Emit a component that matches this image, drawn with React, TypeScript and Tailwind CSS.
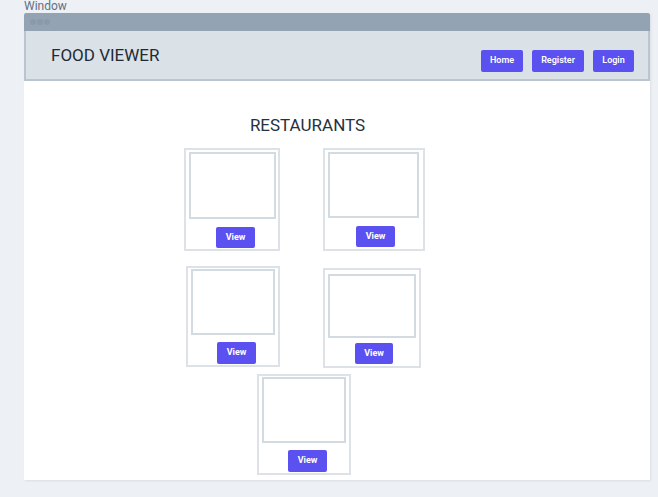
import React from "react";

type CardSpec = {
  outer: string;
  inner: string;
  button: string;
};

const Card = ({ spec }: { spec: CardSpec }) => (
  <div className={`flex flex-col border-2 border-[#dde2e8] bg-white ${spec.outer}`}>
    <div className={`border-2 border-[#d3dbe2] ${spec.inner}`} />
    <button
      className={`flex items-center justify-center rounded-[2px] bg-[#5b50f0] text-[9px] font-bold text-white ${spec.button}`}
    >
      View
    </button>
  </div>
);

const c1: CardSpec = {
  outer: "w-[96px] h-[103px]",
  inner: "ml-[3px] mt-[2px] w-[87px] h-[67px]",
  button: "ml-[30px] mt-[8px] w-[39px] h-[21px]",
};
const c2: CardSpec = {
  outer: "w-[102px] h-[103px]",
  inner: "ml-[3px] mt-[2px] w-[91px] h-[66px]",
  button: "ml-[31px] mt-[8px] w-[39px] h-[21px]",
};
const c3: CardSpec = {
  outer: "w-[94px] h-[101px] ml-[2px]",
  inner: "ml-[3px] mt-[1px] w-[84px] h-[66px]",
  button: "ml-[29px] mt-[7px] w-[39px] h-[22px]",
};
const c4: CardSpec = {
  outer: "w-[98px] h-[100px] mt-[2px]",
  inner: "ml-[3px] mt-[4px] w-[88px] h-[64px]",
  button: "ml-[30px] mt-[5px] w-[38px] h-[21px]",
};
const c5: CardSpec = {
  outer: "w-[94px] h-[101px] ml-[73px]",
  inner: "ml-[3px] mt-[1px] w-[84px] h-[66px]",
  button: "ml-[29px] mt-[7px] w-[39px] h-[22px]",
};

export default function App() {
  return (
    <div className="w-[658px] h-[497px] bg-[#edf0f5] font-['Roboto',sans-serif] overflow-hidden">
      <div className="pl-[24px] text-[12px] leading-[13px] text-[#607084]">Window</div>
      <div className="ml-[24px] w-[626px] shadow-[1px_1px_2px_rgba(0,0,0,0.08)]">
        <div className="flex h-[18px] items-center gap-[1px] rounded-t-[2px] bg-[#94a3b3] pl-[6px]">
          <span className="h-[6px] w-[6px] rounded-full bg-[#8b9aab]" />
          <span className="h-[6px] w-[6px] rounded-full bg-[#8b9aab]" />
          <span className="h-[6px] w-[6px] rounded-full bg-[#8b9aab]" />
        </div>
        <div className="flex h-[50px] items-center justify-between border-x-2 border-b-2 border-[#bac5cf] bg-[#dae1e7] pl-[25px] pr-[14px]">
          <div className="text-[17px] leading-[20px] text-[#1f2a36]">FOOD VIEWER</div>
          <div className="mt-[12px] flex gap-[9px]">
            <button className="flex h-[22px] w-[42px] items-center justify-center rounded-[2px] bg-[#5b50f0] text-[9px] font-semibold text-white">
              Home
            </button>
            <button className="flex h-[22px] w-[52px] items-center justify-center rounded-[2px] bg-[#5b50f0] text-[9px] font-semibold text-white">
              Register
            </button>
            <button className="flex h-[22px] w-[41px] items-center justify-center rounded-[2px] bg-[#5b50f0] text-[9px] font-semibold text-white">
              Login
            </button>
          </div>
        </div>
        <div className="h-[399px] bg-white pt-[34px]">
          <div className="ml-[160px] w-[247px]">
            <div className="text-center text-[17px] leading-[20px] text-[#253140]">RESTAURANTS</div>
            <div className="mt-[13px] flex items-start gap-[43px]">
              <Card spec={c1} />
              <Card spec={c2} />
            </div>
            <div className="mt-[15px] flex items-start gap-[43px]">
              <Card spec={c3} />
              <Card spec={c4} />
            </div>
            <div className="mt-[6px] flex">
              <Card spec={c5} />
            </div>
          </div>
        </div>
      </div>
    </div>
  );
}
